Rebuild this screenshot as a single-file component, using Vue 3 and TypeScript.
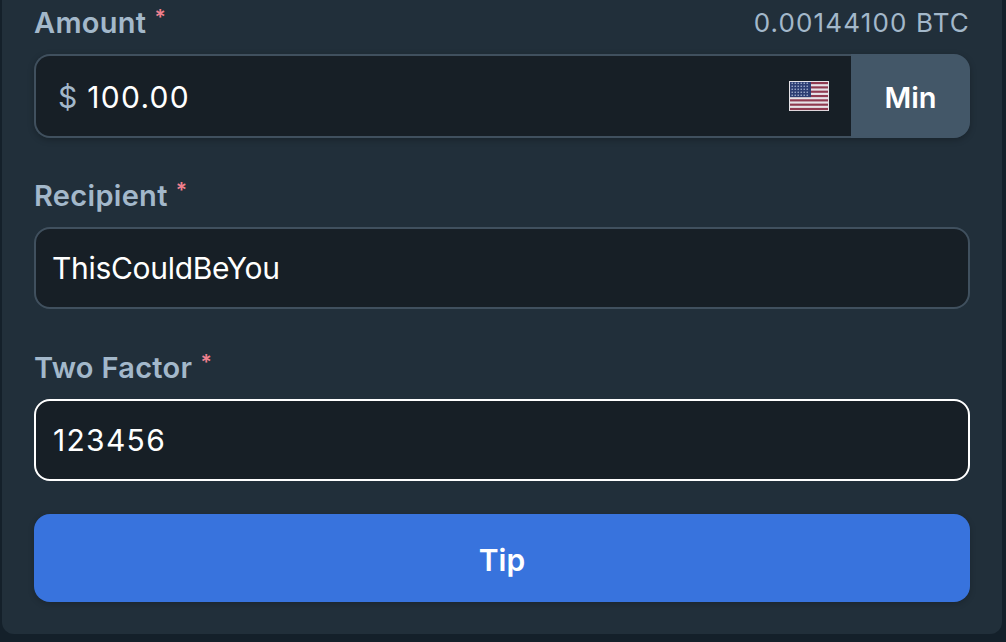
<script setup lang="ts">
const stripes: number[] = [0, 2, 4, 6, 8, 10, 12]
const stars: { x: number; y: number }[] = []
for (let r = 0; r < 5; r++) {
  for (let c = 0; c < 6; c++) {
    stars.push({ x: 1.6 + c * 3, y: 1.5 + r * 3 })
  }
}
</script>

<template>
  <div class="page">
    <form class="panel" @submit.prevent>
      <div class="field first">
        <div class="label-row">
          <label class="label">Amount<span class="req">*</span></label>
          <span class="conv">0.00144100 BTC</span>
        </div>
        <div class="group">
          <div class="input amount">
            <span class="dollar">$</span>
            <span class="value num">100.00</span>
            <svg class="flag" viewBox="0 0 40 30" width="40" height="30" aria-hidden="true">
              <rect width="40" height="30" fill="#e6e3e8" />
              <g fill="#8f3a50">
                <rect v-for="s in stripes" :key="s" x="1" :y="1 + s * 2.16" width="38" height="2.16" />
              </g>
              <rect x="1" y="1" width="21" height="15.1" fill="#2e3f74" />
              <circle v-for="(p, i) in stars" :key="i" :cx="p.x + 1.6" :cy="p.y + 0.8" r="0.75" fill="#b9c4de" />
            </svg>
          </div>
          <button class="min" type="button">Min</button>
        </div>
      </div>

      <div class="field">
        <label class="label">Recipient<span class="req">*</span></label>
        <div class="input">
          <span class="value">ThisCouldBeYou</span>
        </div>
      </div>

      <div class="field last">
        <label class="label">Two Factor<span class="req">*</span></label>
        <div class="input focus">
          <span class="value num">123456</span>
        </div>
      </div>

      <button class="tip" type="submit">Tip</button>
    </form>
  </div>
</template>

<style scoped>
.page {
  box-sizing: border-box;
  width: 1006px;
  height: 642px;
  overflow: hidden;
  background: #14202a;
  padding: 0 4px 8px 2px;
  font-family: Inter, "Open Sans", sans-serif;
}
.panel {
  box-sizing: border-box;
  height: 634px;
  background: #212f3a;
  border-radius: 0 0 12px 12px;
  padding: 6px 32px 32px;
  display: flex;
  flex-direction: column;
}
.field {
  display: flex;
  flex-direction: column;
  gap: 14px;
  margin-bottom: 42px;
}
.field.first {
  margin-bottom: 41px;
}
.field.last {
  margin-bottom: 33px;
}
.label-row {
  display: flex;
  justify-content: space-between;
  align-items: center;
}
.label {
  display: block;
  color: #a3b8ca;
  font-size: 29px;
  font-weight: 600;
  line-height: 34px;
  letter-spacing: 0.3px;
}
.req {
  color: #f0808e;
  font-size: 21px;
  font-weight: 600;
  line-height: 0;
  margin-left: 8px;
  vertical-align: 8px;
}
.conv {
  color: #a3b8ca;
  font-size: 26px;
  line-height: 34px;
  letter-spacing: 1.15px;
}
.group {
  display: flex;
  height: 84px;
  border-radius: 16px;
  box-shadow: 0 2px 6px rgba(0, 0, 0, 0.25);
}
.input {
  box-sizing: border-box;
  height: 82px;
  display: flex;
  align-items: center;
  padding: 0 16px;
  background: #171f26;
  border: 2px solid #40505e;
  border-radius: 16px;
}
.input.focus {
  border-color: #ffffff;
  padding-left: 17px;
}
.input.amount {
  flex: 1;
  height: 84px;
  padding: 0 22px 0 22px;
  border-right: none;
  border-radius: 16px 0 0 16px;
}
.dollar {
  color: #a3b8ca;
  font-size: 30px;
  margin-right: 10px;
  padding-top: 2px;
}
.value {
  color: #ffffff;
  font-size: 30px;
  line-height: 1;
  letter-spacing: -0.3px;
}
.value.num {
  letter-spacing: 1.3px;
}
.amount .value {
  padding-top: 2px;
}
.flag {
  margin-left: auto;
  display: block;
}
.min {
  width: 119px;
  border: none;
  background: #435768;
  color: #ffffff;
  font-family: inherit;
  font-size: 29px;
  font-weight: 600;
  border-radius: 0 16px 16px 0;
  padding: 2px 0 0;
}
.tip {
  height: 88px;
  border: none;
  border-radius: 16px;
  background: #3873dd;
  color: #ffffff;
  font-family: inherit;
  font-size: 30px;
  font-weight: 600;
  padding: 3px 0 0;
  box-shadow: 0 2px 6px rgba(0, 0, 0, 0.2);
}
</style>
